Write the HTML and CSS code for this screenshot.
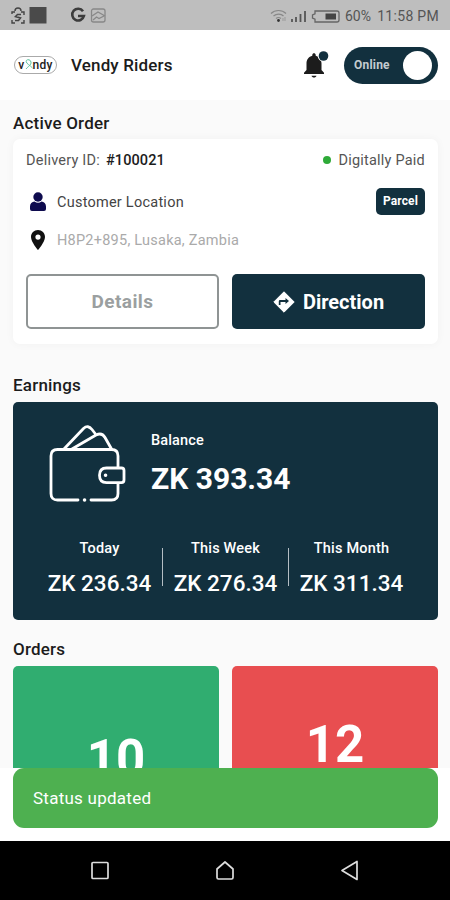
FILE: index.html
```html
<!DOCTYPE html>
<html lang="en">
<head>
    <meta charset="UTF-8">
    <meta name="viewport" content="width=device-width, initial-scale=1.0">
    <title>Vendy Riders</title>
    <link rel="stylesheet" href="styles.css">
</head>
<body>
    <div class="statusBar">
        <svg class="statusLeft" width="100" height="18" viewBox="0 0 100 18">
            <path d="M2 7V5h3M11 5h3v3M2 13v3h3M11 16h3v-3M5 4c0-4 6-4 6 0" fill="none" stroke="#444" stroke-width="1.4"/>
            <path d="M11 7.500H7.500L5.500 9.500l5 1.500-2 2.500H5" fill="none" stroke="#444" stroke-width="1.6"/>
            <path d="M19.500 0h17v16.500h-17z" fill="#4a4a4a"/>
            <path d="M73 4.200A5.900 5.900 0 1 0 73.900 9H68" fill="none" stroke="#3c3c3c" stroke-width="2.600"/>
            <rect x="81.500" y="2" width="13.500" height="13" rx="2" fill="none" stroke="#888" stroke-width="1.300"/>
            <path d="M82 9l6-4 7 4M83 13l3.500-3 2.500 1.500 5-2.500" fill="none" stroke="#888" stroke-width="1.300"/>
        </svg>
        <div class="statusRight">
            <svg width="71" height="16" viewBox="0 0 71 16">
                <g fill="none" stroke="#888" stroke-width="1.200">
                    <path d="M1 5.500c4-4 11-4 15 0M3.500 8c3-2.600 7.500-2.600 10 0M6 10.500c1.500-1.200 3.500-1.200 5 0"/>
                </g>
                <circle cx="8.500" cy="12.500" r="1.400" fill="#333"/>
                <path d="M13 10v3M15 9v4" stroke="#999" stroke-width="1"/>
                <path d="M22 11v3M26 9v5M30.500 6v8M35 3v11" stroke="#555" stroke-width="1.800"/>
                <path d="M45 3h22q2 0 2 2v7q0 2-2 2H45v-2.800l-2.500-1.200v-3L45 5.800z" fill="none" stroke="#666" stroke-width="1.300"/>
                <path d="M55.500 5.500H66v6H55.500z" fill="#444"/>
            </svg>
            <span class="battery">60%</span>
            <span class="clock">11:58 PM</span>
        </div>
    </div>

    <header class="header">
        <div class="logo">v<svg width="8" height="14" viewBox="0 0 8 14"><path d="M1 11C3 8.500 6.500 7 6 4S1 1 1.200 3.500 5 7 7.500 10" fill="none" stroke="#5cc3a0" stroke-width="1"/></svg>ndy</div>
        <h1 class="title">Vendy Riders</h1>
        <div class="bell">
            <svg width="26" height="30" viewBox="0 0 26 30">
                <path d="M1 24v-1.300l2.500-2.600v-6.500c0-4.100 2.300-6.800 5.800-7.800V5c0-2.300 3.400-2.300 3.400 0v.8c3.500 1 5.800 3.700 5.800 7.800v6.500l2.500 2.600V24z" fill="#1c1c1c"/>
                <path d="M8.500 25.800h5c-.5 2.400-4.500 2.400-5 0z" fill="#1c1c1c"/>
                <circle cx="20.500" cy="6" r="5.800" fill="#fff"/>
                <circle cx="20.500" cy="6" r="4.800" fill="#12303e"/>
            </svg>
        </div>
        <div class="toggle">
            <span class="toggleText">Online</span>
            <span class="toggleKnob"></span>
        </div>
    </header>

    <main class="content">
        <h2 class="sectionTitle activeTitle">Active Order</h2>
        <section class="orderCard">
            <div class="idRow">
                <span class="idLabel">Delivery ID:</span>
                <span class="idValue">#100021</span>
                <span class="paid"><i class="dot"></i><span>Digitally Paid</span></span>
            </div>
            <div class="infoRow customerRow">
                <svg width="24" height="20" viewBox="0 0 24 20">
                    <circle cx="12" cy="5" r="4.700" fill="#0e0b4e"/>
                    <path d="M4 17v-2.500C4 11.500 6 10 8.500 9.500c2 1.700 5 1.700 7 0 2.500.5 4.500 2 4.500 5V17q0 2-2 2H6q-2 0-2-2z" fill="#0e0b4e"/>
                </svg>
                <span class="customer">Customer Location</span>
                <span class="badge">Parcel</span>
            </div>
            <div class="infoRow addressRow">
                <svg width="24" height="22" viewBox="0 0 24 22">
                    <path fill-rule="evenodd" d="M12 1c-4 0-7 3-7 7 0 5 7 13 7 13s7-8 7-13c0-4-3-7-7-7zm0 4.500a2.600 2.600 0 1 1 0 5.200 2.600 2.600 0 0 1 0-5.200z" fill="#111"/>
                </svg>
                <span class="address">H8P2+895, Lusaka, Zambia</span>
            </div>
            <div class="buttons">
                <button type="button" class="btn detailsButton">Details</button>
                <button type="button" class="btn directionButton">
                    <svg width="22" height="22" viewBox="0 0 22 22">
                        <path d="M11 .8L21.200 11 11 21.200.8 11z" fill="#fff" stroke="#fff" stroke-width="1" stroke-linejoin="round"/>
                        <path d="M7.500 14v-3h5v2l3.500-3-3.500-3v2H7q-1.200 0-1.200 1.200V14z" fill="#12303e"/>
                    </svg>
                    <span>Direction</span>
                </button>
            </div>
        </section>

        <h2 class="sectionTitle earningsTitle">Earnings</h2>
        <section class="earningsCard">
            <div class="balanceRow">
                <svg width="80" height="80" viewBox="0 0 80 80" fill="none" stroke="#fff" stroke-width="2.800" stroke-linecap="round" stroke-linejoin="round">
                    <path d="M31 76H10.500Q4 76 4 69.500V32q0-6.500 6.500-6.500H64.500q6.500 0 6.500 6.500V43M44 76H64.500q6.500 0 6.500-6.500V60"/>
                    <path d="M17 25L36.500 4.500q4.500-4 8.500 1L48.500 10M25 25L49 11q6-3 9 2.500L64.500 25"/>
                    <path d="M74.500 44H59.500q-7 0-7 7.300t7 7.300H74.500q2.500 0 2.500-2.500V46.500Q77 44 74.500 44z"/>
                    <path d="M58.500 51.300h.1M37.500 76h.1" stroke-width="3.500"/>
                </svg>
                <div>
                    <div class="balanceLabel">Balance</div>
                    <div class="balanceValue">ZK 393.34</div>
                </div>
            </div>
            <div class="periods">
                <div class="period">
                    <div class="periodLabel">Today</div>
                    <div class="periodValue">ZK 236.34</div>
                </div>
                <div class="divider"></div>
                <div class="period">
                    <div class="periodLabel">This Week</div>
                    <div class="periodValue">ZK 276.34</div>
                </div>
                <div class="divider"></div>
                <div class="period">
                    <div class="periodLabel">This Month</div>
                    <div class="periodValue">ZK 311.34</div>
                </div>
            </div>
        </section>

        <h2 class="sectionTitle ordersTitle">Orders</h2>
        <section class="orders">
            <div class="orderBox green">10</div>
            <div class="orderBox red">12</div>
        </section>
    </main>

    <div class="toastArea">
        <div class="toast">Status updated</div>
    </div>

    <nav class="navBar">
        <svg width="22" height="22" viewBox="0 0 22 22"><rect x="3" y="2.500" width="16" height="16" rx="1"/></svg>
        <svg width="22" height="22" viewBox="0 0 22 22"><path d="M3 9L11 2l8 7v8.500q0 1.500-1.500 1.500h-13Q3 19 3 17.500z"/></svg>
        <svg width="22" height="22" viewBox="0 0 22 22"><path d="M18 1.500v18L3 10.500z"/></svg>
    </nav>
</body>
</html>
```
FILE: styles.css
```css
* {
    box-sizing: border-box;
}

body {
    font-family: Roboto, 'Liberation Sans', sans-serif;
    background-color: #fafafa;
    margin: 0;
    width: 450px;
    height: 900px;
    overflow: hidden;
    display: flex;
    flex-direction: column;
}

svg {
    display: block;
    flex: none;
}

h1, h2 {
    margin: 0;
    font-weight: 500;
    color: #1c1c1c;
}

.statusBar {
    height: 30px;
    flex: none;
    background-color: #bebebe;
    display: flex;
    align-items: center;
    justify-content: space-between;
    padding: 1px 11px 0 10px;
}

.statusRight {
    display: flex;
    align-items: center;
    color: #555;
    font-size: 14px;
}

.battery {
    margin-left: 4px;
    letter-spacing: 0.1px;
}

.clock {
    margin-left: 6px;
    letter-spacing: 0.3px;
}

.header {
    height: 70px;
    flex: none;
    background-color: #fff;
    display: flex;
    align-items: center;
    padding: 0 12px 0 14px;
}

.logo {
    width: 43px;
    height: 18px;
    border: 1px solid #aaa;
    border-radius: 9px;
    display: flex;
    align-items: center;
    justify-content: center;
    font-size: 12px;
    font-weight: 500;
    color: #222;
    letter-spacing: 0.3px;
}

.title {
    margin-left: 14px;
    font-size: 17px;
    letter-spacing: 0.15px;
}

.bell {
    margin-left: auto;
}

.toggle {
    width: 94px;
    height: 37px;
    margin-left: 15px;
    padding: 0 6px 0 10px;
    border-radius: 19px;
    background-color: #12303e;
    display: flex;
    align-items: center;
    justify-content: space-between;
}

.toggleText {
    color: #c4ccd0;
    font-size: 12px;
    font-weight: 700;
    letter-spacing: 0.2px;
}

.toggleKnob {
    width: 29px;
    height: 29px;
    border-radius: 50%;
    background-color: #fff;
}

.content {
    height: 668px;
    flex: none;
    padding: 0 12px 0 13px;
    overflow: hidden;
}

.sectionTitle {
    font-size: 17px;
    line-height: 20px;
    letter-spacing: 0.2px;
}

.activeTitle {
    padding: 13px 0 6px;
}

.orderCard {
    height: 205px;
    padding: 11px 13px 0;
    background-color: #fff;
    border-radius: 7px;
    box-shadow: 0 0 10px rgba(0, 0, 0, 0.04);
}

.idRow {
    height: 20px;
    display: flex;
    align-items: center;
    font-size: 14.5px;
    color: #555;
    letter-spacing: 0.22px;
}

.idValue {
    margin-left: 6px;
    color: #1c1c1c;
    font-weight: 500;
    letter-spacing: 0.1px;
}

.paid {
    margin-left: auto;
    display: flex;
    align-items: center;
    gap: 7px;
}

.dot {
    width: 8px;
    height: 8px;
    border-radius: 50%;
    background-color: #2eaa38;
}

.infoRow {
    display: flex;
    align-items: center;
    gap: 7px;
    font-size: 14.5px;
    letter-spacing: 0.24px;
}

.customerRow {
    height: 27px;
    margin-top: 18px;
}

.addressRow {
    height: 22px;
    margin-top: 14px;
}

.customer {
    padding-top: 1px;
    color: #444;
}

.address {
    padding-top: 1px;
    color: #aaa;
}

.badge {
    width: 49px;
    height: 27px;
    margin-left: auto;
    border-radius: 5px;
    background-color: #12303e;
    color: #fff;
    font-size: 12px;
    font-weight: 700;
    letter-spacing: 0.1px;
    line-height: 27px;
    text-align: center;
}

.buttons {
    display: flex;
    gap: 13px;
    margin-top: 23px;
}

.btn {
    width: 193px;
    height: 55px;
    padding: 0;
    border: none;
    border-radius: 5px;
    font-family: inherit;
    font-size: 19px;
    font-weight: 700;
    display: flex;
    align-items: center;
    justify-content: center;
    gap: 8px;
}

.detailsButton {
    background-color: #fff;
    border: 2px solid #8f9494;
    color: #9b9fa0;
    letter-spacing: 0.4px;
}

.directionButton {
    background-color: #12303e;
    color: #fff;
    font-size: 20px;
}

.earningsTitle {
    margin-top: 31px;
    padding-bottom: 7px;
}

.earningsCard {
    height: 218px;
    padding: 22px 24px 0;
    border-radius: 5px;
    background-color: #12303e;
    color: #fff;
}

.balanceRow {
    display: flex;
    gap: 24px;
    padding-left: 10px;
    height: 80px;
}

.balanceLabel {
    margin-top: 7px;
    font-size: 14.5px;
    font-weight: 500;
    line-height: 20px;
    letter-spacing: 0.15px;
}

.balanceValue {
    margin-top: 10px;
    font-size: 30px;
    font-weight: 700;
    line-height: 36px;
}

.periods {
    display: flex;
    margin-top: 35px;
}

.period {
    flex: 1;
    text-align: center;
    white-space: nowrap;
}

.periodLabel {
    font-size: 14.5px;
    font-weight: 500;
    line-height: 20px;
    letter-spacing: 0.2px;
}

.periodValue {
    margin-top: 10px;
    font-size: 22.5px;
    font-weight: 500;
    line-height: 28px;
}

.divider {
    width: 1px;
    height: 38px;
    margin-top: 9px;
    background-color: #b4bec4;
}

.ordersTitle {
    margin-top: 19px;
    padding-bottom: 7px;
}

.orders {
    display: flex;
    gap: 13px;
}

.orderBox {
    flex: 1;
    height: 102px;
    border-radius: 5px 5px 0 0;
    color: #fff;
    font-size: 51px;
    font-weight: 700;
    line-height: 50px;
    text-align: center;
}

.green {
    padding-top: 68px;
    background-color: #30ad70;
}

.red {
    padding-top: 54px;
    background-color: #e84e50;
}

.toastArea {
    height: 73px;
    flex: none;
    padding: 0 12px 0 13px;
    background-color: #fff;
}

.toast {
    height: 60px;
    padding-left: 20px;
    border-radius: 11px;
    background-color: #4eb050;
    color: #fff;
    font-size: 17px;
    letter-spacing: 0.25px;
    line-height: 61px;
}

.navBar {
    height: 59px;
    flex: none;
    background-color: #000;
    display: flex;
    align-items: center;
    justify-content: center;
    gap: 103px;
}

.navBar svg {
    fill: none;
    stroke: #ddd;
    stroke-width: 1.7;
    stroke-linejoin: round;
}
```
